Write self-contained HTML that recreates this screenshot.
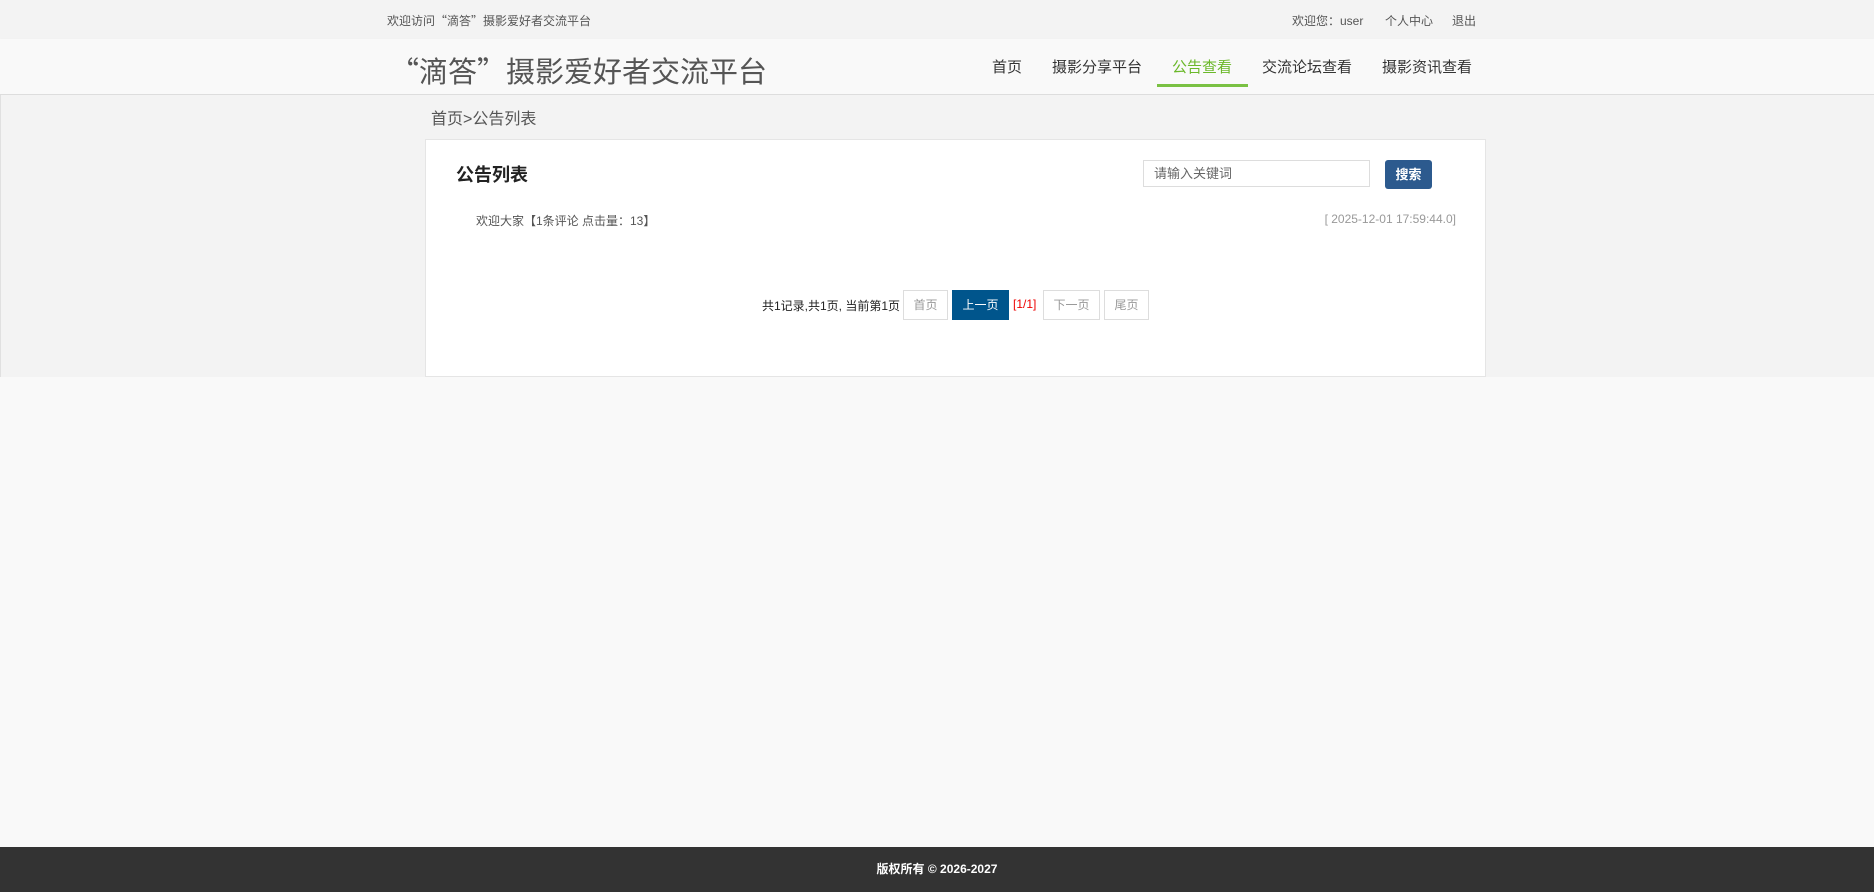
<!DOCTYPE html>
<html><head><meta charset="utf-8"><style>
*{margin:0;padding:0;box-sizing:border-box}
body{width:1874px;height:892px;background:#f9f9f9;font-family:"Liberation Sans","Noto Sans CJK SC",sans-serif;position:relative;overflow:hidden;color:#333}
.abs{position:absolute;white-space:nowrap}
.cjk{font-family:"Noto Sans CJK SC",sans-serif}
.top{position:absolute;left:0;top:0;width:1874px;height:39px;background:#f3f3f3;font-size:12px;color:#555}
.hdr{position:absolute;left:0;top:39px;width:1874px;height:56px;background:#f9f9f9;border-bottom:1px solid #ddd;box-shadow:0 1px 2px rgba(0,0,0,.05)}
.gray{position:absolute;left:0;top:95px;width:1874px;height:282px;background:#f3f3f3;border-left:1px solid #e0e0e0}
.card{position:absolute;left:425px;top:139px;width:1061px;height:238px;background:#fff;border:1px solid #e5e5e5}
.nav{font-size:15px;color:#333;top:56px}
.pg{position:absolute;top:290px;height:30px;border:1px solid #ddd;font-size:12px;color:#999;line-height:28px;text-align:center;background:#fff}
.foot{position:absolute;left:0;top:847px;width:1874px;height:45px;background:#333;color:#fff;font-size:12px;font-weight:bold;text-align:center;line-height:45px}
</style></head><body>
<div class="top">
<div class="abs" style="left:387px;top:12px">欢迎访问<span class="cjk">“滴答”</span>摄影爱好者交流平台</div>
<div class="abs" style="left:1292px;top:12px">欢迎您：user</div>
<div class="abs" style="left:1385px;top:12px">个人中心</div>
<div class="abs" style="left:1452px;top:12px">退出</div>
</div>
<div class="hdr"></div>
<div class="abs cjk" style="left:390px;top:46px;font-size:29px;color:#555;line-height:48px">“滴答”摄影爱好者交流平台</div>
<div class="abs nav" style="left:992px">首页</div>
<div class="abs nav" style="left:1052px">摄影分享平台</div>
<div class="abs nav" style="left:1172px;color:#6bb82a">公告查看</div>
<div class="abs" style="left:1157px;top:84px;width:91px;height:3px;background:#7ac143"></div>
<div class="abs nav" style="left:1262px">交流论坛查看</div>
<div class="abs nav" style="left:1382px">摄影资讯查看</div>
<div class="gray"></div>
<div class="abs" style="left:431px;top:105px;font-size:16px;color:#555">首页&gt;公告列表</div>
<div class="card"></div>
<div class="abs" style="left:456px;top:161px;font-size:18px;font-weight:bold;color:#222">公告列表</div>
<div class="abs" style="left:1143px;top:160px;width:227px;height:27px;border:1px solid #ddd;background:#fff;font-size:13px;color:#666;line-height:25px;padding-left:10px">请输入关键词</div>
<div class="abs" style="left:1385px;top:160px;width:47px;height:29px;background:#2c5a8e;border-radius:3px;color:#fff;font-size:13px;font-weight:bold;text-align:center;line-height:29px">搜索</div>
<div class="abs" style="left:476px;top:212px;font-size:12px;color:#555">欢迎大家【1条评论 点击量：13】</div>
<div class="abs" style="left:1316px;top:212px;font-size:12px;color:#999;width:140px;text-align:right">[ 2025-12-01 17:59:44.0]</div>
<div class="abs" style="left:762px;top:297px;font-size:12px;color:#222">共1记录,共1页, 当前第1页</div>
<div class="pg" style="left:903px;width:45px">首页</div>
<div class="pg" style="left:952px;width:57px;background:#00558c;border-color:#00558c;color:#fff">上一页</div>
<div class="abs" style="left:1013px;top:297px;font-size:12px;color:#e00">[1/1]</div>
<div class="pg" style="left:1043px;width:57px">下一页</div>
<div class="pg" style="left:1104px;width:45px">尾页</div>
<div class="foot">版权所有 © 2026-2027</div>
</body></html>
